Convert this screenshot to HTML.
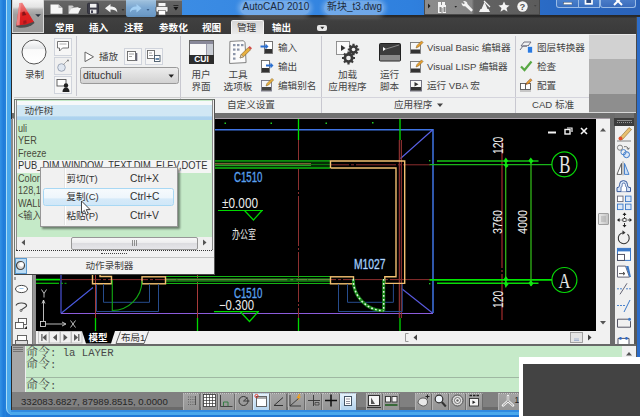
<!DOCTYPE html>
<html><head><meta charset="utf-8">
<style>
html,body{margin:0;padding:0;}
body{width:640px;height:417px;overflow:hidden;position:relative;background:#1f7ad8;font-family:"Liberation Sans","Noto Sans CJK SC",sans-serif;font-size:10px;color:#333;}
div,span{position:absolute;box-sizing:border-box;white-space:nowrap;}
svg{position:absolute;overflow:visible;}
.t{line-height:12px;height:12px;}
.tab{color:#fff;font-size:9.6px;font-weight:bold;top:21px;line-height:13px;}
.lbl{font-size:9.6px;color:#444;line-height:12px;}
.c{text-align:center;}
.row{left:17.5px;font-size:10.6px;color:#4a4a3c;line-height:13px;transform-origin:0 50%;transform:scaleX(.86);}
.cmd{font-family:"Liberation Mono","Noto Serif CJK SC",monospace;font-size:10.6px;color:#484848;line-height:12px;left:26px;}
.cj{position:static;font-size:12px;line-height:12px;}
.sb{top:393px;width:17px;height:16px;background:linear-gradient(#9a9a9a,#808080);border-left:1px solid #b0b0b0;border-right:1px solid #606060;}
</style></head><body>
<!-- desktop / aero frame -->
<div style="left:0;top:0;width:6px;height:417px;background:linear-gradient(90deg,#3292e6,#1f7cda 60%,#2482dc)"></div>
<div style="left:6px;top:0;width:634px;height:414.500px;background:#49a8ec;border-left:1px solid #a8dcf8;border-bottom-left-radius:7px"></div>
<div style="left:11px;top:0;width:626px;height:410px;background:#2a2a2a"></div><div style="left:11px;top:410px;width:629px;height:1.500px;background:#2f8ae2"></div>

<!-- title bar -->
<div id="title" style="left:12px;top:0;width:624px;height:15px;background:linear-gradient(#a0a0a0 0,#646464 8%,#585858 100%)"></div>
<div style="left:182px;top:0;width:458px;height:17.500px;background:linear-gradient(90deg,#3b8ce4 0,#2f80de 50%,#2a6ac4 80%,#2a62b8 100%)"></div><div style="left:182px;top:15.500px;width:458px;height:1.500px;background:rgba(140,190,240,.5)"></div>
<div style="left:12px;top:14.500px;width:628px;height:19.500px;background:linear-gradient(#262626 0,#2c2c2c 10%,#404040 16%,#3a3a3a 100%)"></div>


<!-- app button -->
<div style="left:12px;top:0;width:32px;height:33px;background:linear-gradient(#f4f4f4 0,#e4e4e4 22%,#b4b4b4 30%,#a0a0a0 45%,#989898 100%);border:1px solid #d8d8d8;border-top:none"></div>
<svg style="left:12px;top:0" width="32" height="33" viewBox="0 0 32 33">
 <defs><linearGradient id="ag" x1="0" y1="0" x2="0" y2="1"><stop offset="0" stop-color="#f08484"/><stop offset=".38" stop-color="#e85050"/><stop offset=".45" stop-color="#e02222"/><stop offset="1" stop-color="#d81c20"/></linearGradient></defs>
 <path d="M4 26.500c4 2.500 13 1.500 18.500-3.500l-1-2l-17 3z" fill="#454545" opacity=".9"/>
 <polygon points="7.400,3 10.300,2.800 21.800,21.800 14,24.600 4.300,25.600" fill="url(#ag)"/>
 <polygon points="7.400,3 8.800,2.900 7.600,25.200 4.300,25.600" fill="#f29a9a" opacity=".8"/>
 <polygon points="10.300,12.300 12.300,11.300 14.300,15 10.300,15.800" fill="#8a1418"/>
 <polygon points="11.300,20.800 14.300,20.200 14.600,23.300 11.300,24" fill="#a4181c"/>
 <polygon points="23.200,14.300 29,14.300 26.100,17" fill="#2c3440"/>
</svg>
<!-- quick access -->
<div style="left:126px;top:0;width:30px;height:17px;background:linear-gradient(#a6cae8,#7eaedc 45%,#6a9ccc);border-radius:0 0 2px 2px;opacity:.92"></div>
<svg style="left:44px;top:0" width="140" height="18" viewBox="44 0 140 18">
 <path d="M50.500 4.500h8l4 3.500v5.800h-12z" fill="#f6f6f6"/><path d="M58.500 4.500v3.500h4z" fill="#b4b4b4"/>
 <path d="M68.500 5.500h4l1.500 1.500h4.500v6.500h-10z" fill="#cfcfcf"/><path d="M68.500 13.500l3-5.500h9.500l-3 5.500z" fill="#f4f4f4"/><path d="M71.500 8l6-1.500" stroke="#666" stroke-width=".5"/>
 <rect x="87.500" y="3.200" width="11" height="10.500" rx="1.200" fill="#3c3c48" stroke="#2a2a34" stroke-width=".8"/><rect x="90" y="3.800" width="6.500" height="3.800" fill="#f2f2f2"/><rect x="90" y="9.600" width="6.500" height="4" fill="#e8e8e8"/><rect x="91" y="10.400" width="2" height="2.600" fill="#445"/>
 <path d="M105 8.300l5.500-4.300v2.600c4.500 0 6.800 2 6.800 6c-1.400-2.200-3.400-3-6.800-3v2.800z" fill="#f4f4f4"/>
 <path d="M121.500 9h3l-1.500 2z" fill="#333"/>
 <path d="M141.500 8.300l-5-4.300v2.600c-4 0-6.500 2-6.500 5.800c1.300-2.200 3.200-2.900 6.500-2.900v2.900z" fill="#a4d0f4"/>
 <path d="M146.500 9h3l-1.500 2z" fill="#3a5f8c"/>
 <rect x="158.500" y="3" width="7" height="4" fill="#f4f4f4"/><rect x="156" y="6.500" width="12" height="5.500" rx="1" fill="#f0f0f0" stroke="#444" stroke-width=".7"/><rect x="158.500" y="10.500" width="7" height="4.500" fill="#fff" stroke="#555" stroke-width=".6"/>
 <path d="M173.400 7h5l-2.500 3.500z" fill="#141414"/><rect x="173.400" y="5" width="5" height="1" fill="#2a2a2a"/>
</svg>
<!-- title text -->
<div style="left:240px;top:1px;width:70px;height:14px;border-radius:7px;background:rgba(255,255,255,.3);box-shadow:0 0 4px 2px rgba(255,255,255,.28)"></div>
<div style="left:324px;top:1px;width:60px;height:14px;border-radius:7px;background:rgba(255,255,255,.3);box-shadow:0 0 4px 2px rgba(255,255,255,.28)"></div>
<div class="t" id="t1" style="left:242.500px;top:0.500px;font-size:10px;color:#1c2a3c">AutoCAD 2010</div>
<div class="t" id="t2" style="left:327px;top:0.500px;font-size:10px;color:#1c2a3c">新块_t3.dwg</div>
<!-- info center -->
<div style="left:424px;top:0;width:116px;height:15px;background:linear-gradient(90deg,#8c8c8c 0,#868686 41%,#626262 43%,#5c5c5c 100%);border:1px solid #4a4a4a;border-top:none"></div>
<svg style="left:424px;top:0" width="116" height="15" viewBox="424 0 116 15">
 <path d="M428 3.500l2.500 2.500l-2.500 2.500z" fill="#222"/>
 <path d="M438 2h3v3h1v-3h3v3h1v8h-3.500v-5h-1v5h-3.500v-8z" fill="#f4f4f4"/><rect x="439.500" y="7" width="2" height="5" fill="#888"/><rect x="443.500" y="7" width="2" height="5" fill="#888"/>
 <path d="M454.500 6h2.500l-1.250 1.800z" fill="#222"/>
 <path d="M463 1.500a3 3 0 0 1 4.500 2.500l5.500 6l-1.800 1.800l-6-5.500a3 3 0 0 1-3.500-3.600l2 1.600l1.200-1.200z" fill="#f4f4f4"/>
 <path d="M484.500 2l3 7h-6z M480.500 9h8l1.500 3h-11z" fill="#f4f4f4"/><path d="M484 1l6 6" stroke="#f4f4f4" stroke-width="1.200"/>
 <path d="M504 1.500l1.600 3.600l3.900.3l-3 2.500l1 3.800l-3.500-2.100l-3.500 2.100l1-3.800l-3-2.500l3.900-.3z" fill="#f4f4f4"/>
 <circle cx="522.500" cy="6.500" r="5.200" fill="#f4f4f4"/>
 <path d="M534 5h2.500l-1.250 1.800z" fill="#444"/>
</svg>
<div class="t" style="left:519.500px;top:1px;font-size:9.500px;font-weight:bold;color:#555;line-height:11px">?</div>
<!-- window buttons -->
<div style="left:556px;top:0;width:22.500px;height:8px;background:linear-gradient(#4a80cc,#3a70c0);border:1px solid #9abce6;border-top:none;border-radius:0 0 0 3px"></div>
<div style="left:578.500px;top:0;width:21px;height:8px;background:linear-gradient(#4a80cc,#3a70c0);border:1px solid #9abce6;border-top:none;border-left:none"></div>
<div style="left:600px;top:0;width:36px;height:8px;background:linear-gradient(#4a7cc8,#3a6cbc);border:1px solid #9abce6;border-top:none;border-radius:0 0 3px 3px"></div>
<svg style="left:555px;top:0" width="85" height="9" viewBox="555 0 85 9">
 <rect x="563.500" y="2.200" width="8.500" height="2.500" fill="#fff" stroke="#345" stroke-width=".4"/>
 <rect x="585.500" y="-2" width="6.500" height="5.800" fill="#2a4a80" stroke="#fff" stroke-width="1.700"/>
 <path d="M614 -3l8 8M622 -3l-8 8" fill="none" stroke="#fff" stroke-width="2"/>
</svg>
<!-- tabs -->
<div style="left:231px;top:20px;width:33px;height:15px;background:linear-gradient(#d6d6d6,#ececec);border-radius:2px 2px 0 0;border:1px solid #f4f4f4;border-bottom:none"></div>
<div class="tab" style="left:55px">常用</div>
<div class="tab" style="left:89px">插入</div>
<div class="tab" style="left:124px">注释</div>
<div class="tab" style="left:159px">参数化</div>
<div class="tab" style="left:202px">视图</div>
<div class="tab" style="left:237px;color:#333;font-weight:normal">管理</div>
<div class="tab" style="left:272px">输出</div>
<div style="left:316.500px;top:25px;width:10.500px;height:6px;background:#e8e8e8;border-radius:2px"></div>
<svg style="left:316.500px;top:25px" width="11" height="6"><path d="M3.300 1.800h4l-2 2.500z" fill="#333"/></svg>

<!-- ribbon body -->
<div id="ribbon" style="left:12px;top:34px;width:577px;height:79px;background:#f0f1f1"></div>
<div style="left:589px;top:34px;width:47px;height:25px;background:#d2d2d2;border-top:1px solid #e8e8e8"></div>
<div style="left:589px;top:59px;width:47px;height:34.500px;background:#b0b0b0"></div>
<div style="left:589px;top:93.500px;width:47px;height:18.500px;background:#8e8e8e"></div><div style="left:589px;top:112px;width:47px;height:1px;background:#d8d8d8"></div>
<div style="left:636.500px;top:17px;width:3.500px;height:400px;background:#2c6cc8"></div>


<!-- ribbon separators and title row -->
<div style="left:75.500px;top:36px;width:1px;height:60px;background:#c8c8d0"></div>
<div style="left:180px;top:36px;width:1px;height:77px;background:#c8c8d0"></div>
<div style="left:321px;top:36px;width:1px;height:77px;background:#c8c8d0"></div>
<div style="left:515px;top:36px;width:1px;height:77px;background:#c8c8d0"></div>
<div style="left:181px;top:97px;width:408px;height:1px;background:#d4d4dc"></div>
<div class="lbl" style="left:227px;top:99px">自定义设置</div>
<div class="lbl" style="left:394px;top:99px">应用程序</div>
<svg style="left:436.500px;top:103px" width="7" height="5"><path d="M0 .5h6l-3 3.500z" fill="#444"/></svg>
<div class="lbl" style="left:532px;top:99px">CAD 标准</div>

<!-- record panel -->
<svg style="left:20px;top:38px" width="30" height="30"><defs><linearGradient id="rg" x1="0" y1="0" x2="0" y2="1"><stop offset="0" stop-color="#fff"/><stop offset=".35" stop-color="#e4e6e8"/><stop offset=".4" stop-color="#fafafa"/><stop offset="1" stop-color="#fff"/></linearGradient></defs><circle cx="14" cy="14" r="12" fill="url(#rg)" stroke="#555" stroke-width="1"/></svg>
<div class="lbl c" style="left:14px;width:41px;top:69px">录制</div>
<div style="left:54px;top:38px;width:18px;height:18px;border:1px solid #d0d4dc;background:#f6f6f6"></div>
<div style="left:54px;top:57px;width:18px;height:18px;border:1px solid #d0d4dc;background:#f0f0f0"></div>
<div style="left:54px;top:76px;width:18px;height:18px;border:1px solid #d0d4dc;background:#f6f6f6"></div>
<svg style="left:54px;top:38px" width="18" height="56" viewBox="54 38 18 56">
 <path d="M57.500 41.500h11v6.500h-6l-3 3v-3h-2z" fill="#fff" stroke="#666" stroke-width=".9"/><path d="M59.500 44h7" stroke="#999" stroke-width=".8"/>
 <circle cx="61.500" cy="67.500" r="3.800" fill="#dfe6f0" stroke="#8a96a8" stroke-width=".8"/><path d="M63 65l5-5" stroke="#999" stroke-width=".8"/><circle cx="68" cy="60.500" r=".9" fill="#777"/>
 <rect x="57" y="79.500" width="9" height="6.500" fill="#fff" stroke="#555" stroke-width=".9"/><circle cx="66" cy="85.500" r="2.200" fill="#222"/><path d="M62.500 92c0-3 1.500-4.500 3.500-4.500s3.500 1.500 3.500 4.500z" fill="#222"/>
</svg>
<svg style="left:84px;top:51px" width="11" height="12"><path d="M1 1l8.500 4.800l-8.500 4.800z" fill="#fff" stroke="#666" stroke-width="1"/></svg>
<div class="lbl" style="left:99px;top:51px">播放</div>
<div style="left:124px;top:48px;width:18px;height:17px;border:1px solid #d0d4dc;background:#f6f6f6"></div>
<div style="left:145px;top:48px;width:18px;height:17px;border:1px solid #d0d4dc;background:#f6f6f6"></div>
<svg style="left:124px;top:48px" width="40" height="17" viewBox="124 48 40 17">
 <rect x="127.500" y="51.500" width="8" height="9" fill="#fff" stroke="#666" stroke-width=".9"/><path d="M129 54h5M129 56.500h3" stroke="#888" stroke-width=".8"/><path d="M136.500 53v8" stroke="#667" stroke-width="1.600"/>
 <rect x="147.500" y="50.500" width="7" height="8" fill="#fff" stroke="#666" stroke-width=".9"/><path d="M149 53h3M149 55.500h4" stroke="#888" stroke-width=".8"/><rect x="154.500" y="55.500" width="5.500" height="6" fill="#fff" stroke="#456" stroke-width=".9"/><rect x="155.500" y="58" width="3.500" height="2" fill="#68a"/>
</svg>
<div style="left:80px;top:67px;width:99px;height:17px;border:1px solid #9a9a9a;border-radius:2.500px;background:linear-gradient(#ececec,#d2d2d2)"></div>
<div class="t" style="left:83px;top:69px;font-size:10.5px;color:#333">dituchuli</div>
<svg style="left:168px;top:74px" width="7" height="5"><path d="M.5 .5h5.500l-2.750 3.300z" fill="#222"/></svg>

<!-- customize panel -->
<div style="left:189px;top:40px;width:25px;height:24px;background:#f8f8f8;border:1px solid #666"></div>
<div style="left:190px;top:41px;width:23px;height:2.500px;background:#889"></div>
<div style="left:206px;top:44px;width:7px;height:12px;background:#c8ccd4;border-left:1px solid #99a"></div>
<div style="left:189px;top:55px;width:25px;height:9px;background:#2c2c2c"></div>
<div class="t" style="left:189px;width:25px;top:55px;font-size:8.500px;font-weight:bold;color:#fff;text-align:center;line-height:9px;height:9px">CUI</div>
<div class="lbl c" style="left:181px;width:40px;top:69px">用户</div>
<div class="lbl c" style="left:181px;width:40px;top:81px">界面</div>
<svg style="left:228px;top:39px" width="24" height="26" viewBox="228 39 24 26">
 <path d="M230.500 41h13.500l1.500 2v20h-16.500z" fill="#fbfbfb" stroke="#777" stroke-width=".9" transform="rotate(-3 238 52)"/>
 <g fill="#8a94a8"><rect x="233" y="44" width="2.500" height="2.200"/><rect x="237" y="44" width="2.500" height="2.200"/><rect x="241" y="44" width="2.500" height="2.200"/><rect x="233" y="48.500" width="2.500" height="2.200"/><rect x="237" y="48.500" width="2.500" height="2.200"/><rect x="233" y="53" width="2.500" height="2.200"/><rect x="233" y="57.500" width="2.500" height="2.200"/></g>
 <path d="M240 58l1.200-3.500l7-7l2.300 2.300l-7 7z" fill="#e8b040" stroke="#7a5a20" stroke-width=".6"/><path d="M248.200 47.500l1.500-1.500l2.300 2.300l-1.500 1.500z" fill="#d0504a"/><path d="M240 58l1.200-3.500l2.300 2.300z" fill="#f0d8b0" stroke="#555" stroke-width=".4"/>
</svg>
<div class="lbl c" style="left:218px;width:40px;top:69px">工具</div>
<div class="lbl c" style="left:218px;width:40px;top:81px">选项板</div>
<svg style="left:260px;top:40px" width="14" height="52" viewBox="260 40 14 52">
 <rect x="264.500" y="41.500" width="8" height="12" fill="#fff" stroke="#666" stroke-width=".9"/><rect x="265" y="49" width="7" height="4" fill="#333"/><path d="M260.500 45.500h5v-2l3 3l-3 3v-2h-5z" fill="#2a6fd0"/>
 <rect x="261.500" y="60.500" width="8" height="12" fill="#fff" stroke="#666" stroke-width=".9"/><rect x="262" y="68" width="7" height="4" fill="#333"/><path d="M266 64.500h4.500v-2l3 3l-3 3v-2h-4.500z" fill="#2a6fd0"/>
 <rect x="261.500" y="80.500" width="10" height="10.500" fill="#f4f4f8" stroke="#778" stroke-width=".9"/><rect x="262" y="87" width="9" height="3.600" fill="#444"/><path d="M266 86l1-2.600l5-5l1.600 1.600l-5 5z" fill="#e8b040" stroke="#7a5a20" stroke-width=".5"/>
</svg>
<div class="lbl" style="left:278px;top:42px">输入</div>
<div class="lbl" style="left:278px;top:61px">输出</div>
<div class="lbl" style="left:278px;top:80px">编辑别名</div>

<!-- applications panel -->
<svg style="left:334px;top:39px" width="70" height="28" viewBox="334 39 70 28">
 <rect x="336.500" y="41.500" width="13" height="13" fill="#fafafa" stroke="#888" stroke-width=".9"/><path d="M341 45l4.500 3l-4.500 3z" fill="#333"/>
 <g fill="#3a3a3a"><circle cx="353.500" cy="49.500" r="4.200"/><circle cx="348.500" cy="58" r="5"/></g>
 <g stroke="#3a3a3a" stroke-width="2.200"><path d="M353.500 43.800v11.400M347.800 49.500h11.400M349.500 45.500l8 8M357.500 45.500l-8 8"/><path d="M348.500 51.500v13M342 58h13M344 53.500l9 9M353 53.500l-9 9"/></g>
 <circle cx="353.500" cy="49.500" r="1.800" fill="#f0f0f0"/><circle cx="348.500" cy="58" r="2.300" fill="#f0f0f0"/>
 <rect x="379.500" y="43.500" width="21" height="17.500" rx="1" fill="#3c3c3c" stroke="#222" stroke-width="1"/><rect x="380" y="55" width="20" height="5.500" fill="#8a8a8a"/><path d="M383 47l3 2l-3 2z" fill="#fff"/><path d="M386 49l13-4" stroke="#aaa" stroke-width=".7"/>
</svg>
<div class="lbl c" style="left:327px;width:41px;top:69px">加载</div>
<div class="lbl c" style="left:327px;width:41px;top:81px">应用程序</div>
<div class="lbl c" style="left:369px;width:41px;top:69px">运行</div>
<div class="lbl c" style="left:369px;width:41px;top:81px">脚本</div>
<svg style="left:409px;top:40px" width="15" height="52" viewBox="409 40 15 52">
 <rect x="410.500" y="42.500" width="10" height="11" fill="#f8f8f8" stroke="#777" stroke-width=".9"/><rect x="411" y="49.500" width="9" height="3.600" fill="#333"/><path d="M416 48l1-2.600l4.500-4.500l1.600 1.600l-4.500 4.500z" fill="#e8a030" stroke="#7a5a20" stroke-width=".5"/>
 <rect x="410.500" y="61.500" width="10" height="11" fill="#f8f8f8" stroke="#777" stroke-width=".9"/><rect x="411" y="68.500" width="9" height="3.600" fill="#333"/><path d="M416 67l1-2.600l4.500-4.500l1.600 1.600l-4.500 4.500z" fill="#e8a030" stroke="#7a5a20" stroke-width=".5"/>
 <rect x="410.500" y="80.500" width="11" height="10.500" fill="#f8f8f8" stroke="#667" stroke-width=".9"/><rect x="411" y="87" width="10" height="3.600" fill="#333"/><path d="M414.500 82l4 2.300l-4 2.300z" fill="#333"/>
</svg>
<div class="lbl" style="left:427px;top:42px">Visual Basic 编辑器</div>
<div class="lbl" style="left:427px;top:61px">Visual LISP 编辑器</div>
<div class="lbl" style="left:427px;top:80px">运行 VBA 宏</div>

<!-- CAD standards -->
<svg style="left:519px;top:40px" width="16" height="52" viewBox="519 40 16 52">
 <path d="M521 46l3-4h7l-3 4zM520 50l3-4h6" fill="none" stroke="#667" stroke-width=".9"/><rect x="527.500" y="46.500" width="5" height="6.500" fill="#2a7ae0" stroke="#fff" stroke-width=".6"/>
 <path d="M521 66.500l3.500 3.500l7-8.500" fill="none" stroke="#58a844" stroke-width="2.200"/>
 <rect x="520.500" y="83.500" width="5" height="6" fill="#fff" stroke="#555" stroke-width=".9"/><rect x="525.500" y="83.500" width="5" height="6" fill="#fff" stroke="#555" stroke-width=".9"/><path d="M520 91h11" stroke="#888" stroke-width=".8"/><path d="M526 84.500l1-2.300l3.500-3.500l1.500 1.500l-3.500 3.500z" fill="#e8a030" stroke="#7a3a20" stroke-width=".5"/>
</svg>
<div class="lbl" style="left:537px;top:42px">图层转换器</div>
<div class="lbl" style="left:537px;top:61px">检查</div>
<div class="lbl" style="left:537px;top:80px">配置</div>

<div style="left:635.500px;top:17px;width:1px;height:96px;background:#4a4a4a"></div>
<!-- area below ribbon -->
<div style="left:12px;top:113px;width:624px;height:6px;background:#707070"></div><div style="left:12px;top:118px;width:598px;height:1px;background:#a8a0a8"></div>
<!-- drawing -->
<div id="draw" style="left:36px;top:119px;width:560px;height:212px;background:#000"></div>


<svg id="cad" style="left:36px;top:119px" width="560" height="212" viewBox="36 119 560 212">
<g fill="none" stroke-width="1" shape-rendering="auto">
 <!-- green dots -->
 <g fill="#22cc22" stroke="none"><rect x="224.500" y="122.500" width="1.500" height="1.500"/><rect x="270.500" y="122.500" width="1.500" height="1.500"/><rect x="325.500" y="122.500" width="1.500" height="1.500"/><rect x="372" y="122" width="1.500" height="1.500"/></g>
 <!-- blue frame -->
 <path d="M215 129.800H433V313" stroke="#3f74e4" stroke-width="1.500"/>
 <path d="M400.500 158.500L432.500 130" stroke="#5a62e8" stroke-width="1.100"/>
 <path d="M61 275V313.500" stroke="#4a52d8" stroke-width="1.200"/>
 <path d="M61 313.500H433" stroke="#8c5cdc" stroke-width="1.100"/>
 <path d="M61.500 313L93 287.500" stroke="#4a5ae0" stroke-width="1.100"/>
 <path d="M401.500 288.500L432.500 313" stroke="#5a5ae0" stroke-width="1.100"/>
 <!-- red verticals -->
 <path d="M298.500 140V318" stroke="#8c3030" stroke-width="1" stroke-dasharray="50 2 2 2"/>
 <path d="M399.300 140V318M401.300 140V318" stroke="#a83a3a" stroke-width="1"/>
 <path d="M95.500 275V318M197.500 275V318" stroke="#a83a3a" stroke-width="1"/>
 <path d="M502 140V320" stroke="#8c2626" stroke-width="1.400" stroke-dasharray="128 2 2 2 26 2 2 2"/>
 <!-- green verticals top/bottom -->
 <path d="M298.500 119V140M400 119V140" stroke="#00e000" stroke-width="1.300"/>
 <path d="M95.500 318V331M197.500 318V331M298.500 318V331M400 318V331" stroke="#00d800" stroke-width="1.300"/>
 <!-- red horizontals -->
 <path d="M215 164.800H430" stroke="#8c2e2e" stroke-width="1" stroke-dasharray="40 2 3 2"/>
 <path d="M61 279.600H430" stroke="#8c2e2e" stroke-width="1" stroke-dasharray="40 2 3 2"/>
 <!-- window bands -->
 <rect x="215" y="160" width="115" height="8.800" fill="#062c06" stroke="none"/>
 <path d="M215 160.900H330M215 168H330" stroke="#0c8e0c" stroke-width="1.800"/>
 <path d="M215 163.800H311" stroke="#7c5e36" stroke-width="1.500"/><path d="M311 164.500H330" stroke="#0a7a0a" stroke-width="1"/>
 <path d="M215 165.300H311" stroke="#22a422" stroke-width="1.300"/>
 <rect x="165.500" y="278.100" width="164.500" height="4" fill="#0a6a0a" stroke="none"/>
 <path d="M165.500 276.500H330M165.500 283.500H330" stroke="#14b414" stroke-width="1.200"/>
 <path d="M165.500 279.700H330" stroke="#8c8c58" stroke-width=".9" stroke-dasharray="11 .8 110 3 3 3"/>
 <path d="M36 279.600H60" stroke="#00e800" stroke-width="1.700"/><path d="M36 283.300H59" stroke="#08c808" stroke-width="1.200"/><path d="M61 283.300H68" stroke="#10b010" stroke-width="1" stroke-dasharray="2 1.500"/>
 <!-- orange walls -->
 <g stroke="#f2c070" stroke-width="1.400">
 <path d="M330.500 168V161H404.700V283.400H384.800V276.800H396V168H330.500"/>
 <rect x="330.500" y="276.800" width="23" height="7"/>
 <rect x="142" y="276.800" width="23.500" height="7"/>
 <path d="M92.500 275V283.800H111.500V276.500H100V275"/>
 </g>
 <!-- blue door frames -->
 <g stroke="#264c8c" stroke-width="1">
 <path d="M96.500 284V311.500H158.500V284M103.500 284V302.300H149.500V284"/>
 <path d="M338.500 284V311.500H402.300V284M347.500 284V302.300H393.400V284"/>
 </g>
 <!-- doors -->
 <path d="M112.300 280V310.500A30 30 0 0 0 142 281" stroke="#12a412" stroke-width="1.150"/>
 <path d="M383.700 279V311M353.300 279A31 31 0 0 0 383.500 310.800" stroke="#1a8a1a" stroke-width="3"/>
 <path d="M383.700 279V311M353.300 279A31 31 0 0 0 383.500 310.800" stroke="#e0f4e0" stroke-width="1.500" stroke-dasharray="1.800 2.200"/>
 <!-- green dimension lines -->
 <g stroke="#10d010">
 <path d="M437 161H538.500" stroke="#14c414" stroke-width="1.300"/><path d="M437 283.300H538.500" stroke="#08dc08" stroke-width="1.400"/>
 <path d="M429.500 164.700H552" stroke="#1ab41a" stroke-width="1.200"/><path d="M429.500 279.900H552" stroke="#00e600" stroke-width="1.700"/>
 <path d="M505.700 161V287.500M531 160V286" stroke="#30b418" stroke-width="1.300"/>
 <circle cx="564.400" cy="164.300" r="12.500" stroke="#08d808" stroke-width="1.200"/>
 <circle cx="564.400" cy="280" r="12.500" stroke="#08d808" stroke-width="1.200"/>
 </g>
 <g fill="#10e810" stroke="none">
 <path d="M503.500 161l2.300-3.500l2.500 3.500l-2.500 2.500zM503.800 165l2.200-2.500l2.500 3.500l-2.500 2zM528.500 160.500l2.300-3l2.700 3.500l-2.500 3z"/>
 <path d="M503.500 279.500l2.300-3.500l2.500 3.500l-2.500 2.500zM503.800 283.500l2.200-2.500l2.500 3.500l-2.500 2.500zM528.500 283l2.300-3l2.700 3.500l-2.500 3z"/>
 </g>
 <g fill="#22cc22" stroke="none"><rect x="429" y="160" width="1.300" height="1.300"/><rect x="429" y="283" width="1.300" height="1.300"/></g>
 <!-- elevation markers -->
 <g stroke="#00d800" stroke-width="1.200">
 <path d="M218 210.500H263M244.500 210.500L253.500 220L262 210.500"/>
 <path d="M214 311.700H259M240.500 312L249.500 321.500L258 312"/>
 </g>
 <!-- UCS icon -->
 <g stroke="#dcdcdc" stroke-width=".85">
 <path d="M43.500 321V300M45.500 324H65M62 322l4 2l-4 2M42 303.500l1.500-3.500l1.500 3.500"/>
 <rect x="40.500" y="321.500" width="5" height="5"/>
 <path d="M41.500 289.500l2.500 4l2.500-4M44 293.500V297.500"/>
 <path d="M70.500 320.500l5 7M75.500 320.500l-5 7"/>
 </g>
 <!-- doc window buttons -->
 <g stroke="#f4f4f4" stroke-width="1.600">
 <path d="M548 132.500H556" stroke-width="2"/>
 <rect x="565" y="129.500" width="5" height="4.500" stroke-width="1.400"/><path d="M567 128H572V132" stroke-width="1.200"/>
 <path d="M581 128l6 6M587 128l-6 6"/>
 </g>
</g>
<g font-family="'Liberation Sans','Noto Sans CJK SC',sans-serif" lengthAdjust="spacingAndGlyphs">
 <text x="234" y="181.800" font-size="15" fill="#5aa0ee" stroke="#5aa0ee" stroke-width=".35" textLength="28.500" lengthAdjust="spacingAndGlyphs">C1510</text>
 <text x="234" y="297.800" font-size="15" fill="#5aa0ee" stroke="#5aa0ee" stroke-width=".35" textLength="28.500" lengthAdjust="spacingAndGlyphs">C1510</text>
 <text x="222" y="207.700" font-size="14" fill="#ececec" textLength="36" lengthAdjust="spacingAndGlyphs">±0.000</text>
 <text x="219" y="309.700" font-size="14" fill="#ececec" textLength="35" lengthAdjust="spacingAndGlyphs">−0.300</text>
 <text x="232" y="238.500" font-size="12" fill="#e8e8e8" textLength="24" lengthAdjust="spacingAndGlyphs">办公室</text>
 <text x="354" y="269.200" font-size="15.500" fill="#dcefff" textLength="31.500" lengthAdjust="spacingAndGlyphs" stroke="#5a9ae8" stroke-width=".45">M1027</text>
 <text transform="translate(502.800 154) rotate(-90)" font-size="15" fill="#f0f0f0" textLength="17.300" lengthAdjust="spacingAndGlyphs">120</text>
 <text transform="translate(502.800 308) rotate(-90)" font-size="15" fill="#f0f0f0" textLength="17.300" lengthAdjust="spacingAndGlyphs">120</text>
 <text transform="translate(502.300 234) rotate(-90)" font-size="13.500" fill="#f0f0f0" textLength="24" lengthAdjust="spacingAndGlyphs">3760</text>
 <text transform="translate(527.300 234) rotate(-90)" font-size="13.500" fill="#f0f0f0" textLength="24" lengthAdjust="spacingAndGlyphs">4000</text>
 <text x="559" y="172.700" font-family="'Liberation Serif',serif" font-size="24.500" fill="#e4e4e4" textLength="11.500" lengthAdjust="spacingAndGlyphs">B</text>
 <text x="558.500" y="287.700" font-family="'Liberation Serif',serif" font-size="22" fill="#e4e4e4" textLength="12" lengthAdjust="spacingAndGlyphs">A</text>
</g>
</svg>


<!-- left toolbar -->
<div style="left:11px;top:119px;width:2px;height:227px;background:#8a8a8a"></div>
<div style="left:13px;top:119px;width:18.500px;height:226px;background:#f0f0f0"></div>
<div style="left:31.500px;top:119px;width:4.500px;height:225px;background:linear-gradient(90deg,#6a6a6a,#9a9a9a 40%,#8a8a8a)"></div>
<svg style="left:13px;top:275px" width="19" height="70" viewBox="13 275 19 70">
 <path d="M15 277v3" stroke="#555" stroke-width="1"/>
 <ellipse cx="21.500" cy="289" rx="6" ry="3.600" fill="#fff" stroke="#444" stroke-width="1"/><path d="M19.500 288.500h4" stroke="#9cc4e8" stroke-width="1"/>
 <path d="M16 305.500c1-3 9-3.500 10.500-.5c1 2.500-4 3-5 5" fill="none" stroke="#444" stroke-width="1.100"/><circle cx="21" cy="310.500" r="1" fill="none" stroke="#444" stroke-width=".8"/>
 <rect x="18.500" y="318.500" width="8" height="6" fill="#fff" stroke="#555" stroke-width=".9"/><rect x="15.500" y="322.500" width="8" height="6" fill="#fff" stroke="#555" stroke-width=".9"/><path d="M24 329l3 0l0 -3z" fill="#222"/>
 <rect x="17.500" y="335.500" width="9" height="5" fill="#fff" stroke="#555" stroke-width=".9"/><rect x="15.500" y="340.500" width="12" height="5" fill="#ddd" stroke="#555" stroke-width=".9"/>
</svg>

<!-- vertical scrollbar of drawing -->
<div style="left:596px;top:119px;width:14px;height:212px;background:#f1f1f1"></div>
<div style="left:597.500px;top:213px;width:11px;height:12px;background:linear-gradient(90deg,#e8e8e8,#c4c4c4);border:1px solid #a0a0a0;border-radius:1px"></div>
<svg style="left:596px;top:119px" width="14" height="212" viewBox="596 119 14 212">
 <path d="M600 131.500l3-3.500l3 3.500z" fill="#555"/><path d="M600 321l3 3.500l3-3.500z" fill="#555"/>
 <path d="M601 217h5M601 219h5M601 221h5" stroke="#999" stroke-width=".7"/>
</svg>
<div style="left:610px;top:113px;width:5px;height:232px;background:#6c6c6c"></div>
<!-- right toolbar -->
<div style="left:614px;top:118px;width:20px;height:8px;background:#3c3c3c"></div>
<div style="left:617px;top:120px;width:15px;height:1px;background:#8a8a8a"></div>
<div style="left:617px;top:122px;width:15px;height:1px;border-top:1px dotted #999"></div>
<div style="left:615px;top:126px;width:18.500px;height:219px;background:#f0f0f0"></div>
<div style="left:633.500px;top:113px;width:3px;height:297px;background:#585858"></div>
<svg style="left:615px;top:126px" width="20" height="219" viewBox="615 126 20 219">
 <g transform="translate(0 -2.5)"><path d="M620 140l9-10l2.500 2l-9 10z" fill="#e8c070" stroke="#8a6a30" stroke-width=".6"/><circle cx="620.500" cy="141" r="2" fill="#e0502a"/><path d="M617 143.500h14" stroke="#666" stroke-width=".8"/></g>
 <g transform="translate(0 -2.8)"><circle cx="620" cy="150.500" r="2.600" fill="none" stroke="#777" stroke-width=".9"/><circle cx="626.500" cy="157.500" r="3" fill="#dce8f8" stroke="#3a78c8" stroke-width="1"/><circle cx="623.500" cy="155" r="2.600" fill="none" stroke="#3a78c8" stroke-width=".9"/><path d="M624 149.500c2.500-.5 4 .5 4.500 2.500l1-1.500M628.500 152l-1.700-.5" fill="none" stroke="#555" stroke-width=".8"/></g>
 <g transform="translate(0 -4.6)"><path d="M623 166v14" stroke="#777" stroke-width=".7"/><path d="M621.500 168v11h-4.500z" fill="#fff" stroke="#555" stroke-width=".9"/><path d="M624.500 168v11h4.500z" fill="#cfe0f4" stroke="#3a78c8" stroke-width=".9"/></g>
 <g transform="translate(0 -7.9)"><path d="M617 199.500v-4c2 0 2.500-1 2.500-3a4 4 0 0 1 8 0c0 2 .5 3 3 3v4z" fill="#d8e6f8" stroke="#3a5a9a" stroke-width="1"/><path d="M621 199.500v-4.500c1 0 1.200-1 1.200-2.500a1.600 1.600 0 0 1 3.200 0c0 1.500 .2 2.500 1.200 2.500v4.500" fill="#fff" stroke="#3a5a9a" stroke-width=".8"/></g>
 <g transform="translate(0 -10.4)"><g fill="#fff" stroke="#667" stroke-width=".9"><rect x="617.500" y="206.500" width="5.500" height="5.500"/><rect x="625.500" y="206.500" width="5.500" height="5.500" stroke="#3a78c8" fill="#dce8f8"/><rect x="617.500" y="214.500" width="5.500" height="5.500" stroke="#3a78c8" fill="#dce8f8"/><rect x="625.500" y="214.500" width="5.500" height="5.500" stroke="#3a78c8" fill="#dce8f8"/></g></g>
 <g transform="translate(0 -12.0)"><path d="M624.500 226v12M618.500 232h12" stroke="#333" stroke-width="1" stroke-dasharray="2 1"/><path d="M624.500 224.500l2 2.500h-4zM624.500 239.500l2-2.500h-4zM617 232l2.500-2v4zM632 232l-2.500-2v4z" fill="#222"/><rect x="623" y="230.500" width="3" height="3" fill="#fff" stroke="#333" stroke-width=".7"/></g>
 <g transform="translate(0 -13.3)"><path d="M627.500 247.500a5.500 5.500 0 1 1-4-1.500" fill="none" stroke="#333" stroke-width="1.100"/><path d="M622.500 243.500l3 2.500l-3 2z" fill="#333"/></g>
 <g transform="translate(0 -14.1)"><rect x="617.500" y="262.500" width="13" height="12" fill="#fff" stroke="#3a78c8" stroke-width="1"/><rect x="617.500" y="262.500" width="13" height="3" fill="#3a78c8"/><rect x="617.500" y="268.500" width="7" height="6" fill="#fff" stroke="#445" stroke-width=".9"/></g>
 <g transform="translate(0 -17.4)"><path d="M617.500 283.500h8l4 11h-12z" fill="#fff" stroke="#556" stroke-width=".9"/><path d="M626 283.500l3.500 11h1.500l-2.500-11z" fill="#3a78c8"/><path d="M619 291h5M623 289.500l2 1.500l-2 1.500" stroke="#222" stroke-width=".8" fill="none"/></g>
 <g transform="translate(0 -14.7)"><path d="M617 303.500h5M626 303.500h6" stroke="#3a78c8" stroke-width=".9" stroke-dasharray="2 1"/><path d="M620 309l7-11" stroke="#556" stroke-width=".9"/></g>
 <g transform="translate(0 -15.0)"><path d="M617 320.500h8" stroke="#3a78c8" stroke-width=".9" stroke-dasharray="2 1"/><path d="M624 327l6-12" stroke="#3a78c8" stroke-width="1"/></g>
 <g transform="translate(0 -13.8)"><path d="M617.500 341v-8h11" fill="none" stroke="#445" stroke-width=".9"/><path d="M617.500 341h13v-6" fill="none" stroke="#445" stroke-width=".9"/><circle cx="629.500" cy="333" r="1.500" fill="#3a78c8"/></g>
 <g transform="translate(0 3.4)"><path d="M618 342.500v-7.500h11v7.500" fill="#fff" stroke="#445" stroke-width=".9"/><circle cx="620.500" cy="335" r="1.300" fill="#2a68c8"/><circle cx="626.500" cy="335" r="1.300" fill="#2a68c8"/></g>
</svg>
<div style="left:612px;top:344px;width:24px;height:2px;background:#5a5a5a"></div>

<!-- model tab bar -->
<div style="left:36px;top:331px;width:574px;height:13px;background:#f1f1f1"></div>
<svg style="left:36px;top:331px" width="574" height="13" viewBox="36 331 574 13">
 <g stroke="#b8b8b8" stroke-width=".8" fill="none"><rect x="38.500" y="331.500" width="10.500" height="11.500"/><rect x="49.500" y="331.500" width="10.500" height="11.500"/><rect x="60.500" y="331.500" width="10.500" height="11.500"/><rect x="71.500" y="331.500" width="10.500" height="11.500"/></g>
 <g fill="#555"><path d="M46.500 334v7l-4-3.500z"/><rect x="41.300" y="334" width="1.200" height="7"/><path d="M57 334v7l-4-3.500z"/><path d="M63.500 334v7l4-3.500z"/><path d="M74 334v7l4-3.500z"/><rect x="78.200" y="334" width="1.200" height="7"/></g>
 <path d="M82 331h33l-4 12.500h-25z" fill="#000"/>
 <path d="M116 343.500l4.500-12M144 343.500l4.500-12M116 343.500h28" stroke="#555" stroke-width=".9" fill="none"/>
 <path d="M405.500 333.500v8h3M405.500 333.500h3" stroke="#999" stroke-width="1" fill="none"/><path d="M417 334.500v6l-3.500-3z" fill="#444"/>
 <rect x="570.500" y="332.500" width="12" height="10" fill="#e4e4e4" stroke="#9a9a9a" stroke-width=".9"/><path d="M574 339h5M574 340.500h5" stroke="#8aa0c8" stroke-width=".7"/>
 <path d="M588 334.500v6l3.500-3z" fill="#444"/>
</svg>
<div class="t" style="left:88.500px;top:332px;font-size:9.500px;color:#fff;font-weight:bold;line-height:11px">模型</div>
<div class="t" style="left:121px;top:332px;font-size:9.500px;color:#333;line-height:11px">布局1</div>


<!-- action tree panel -->
<div style="left:14px;top:97px;width:201px;height:1px;background:#cfcfcf"></div><div style="left:14px;top:98.500px;width:201px;height:176px;background:#f1f1f1;border:1px solid #707870;border-right-color:#555;border-bottom-color:#444"></div>
<div style="left:16px;top:100px;width:196.500px;height:150px;background:#c5eac8;border:1px solid #8a8a8a;border-top:none;border-bottom:1px dotted #444"></div>
<div style="left:17px;top:101px;width:195px;height:4px;background:#f6f8fa"></div>
<div style="left:17px;top:104.500px;width:194.500px;height:11.500px;background:#d0e7f4"></div>
<div style="left:17px;top:115.500px;width:194.500px;height:4.500px;background:linear-gradient(#c0def2,#acd2ee 40%)"></div>
<div class="lbl" style="left:24.500px;top:104.500px;color:#444">动作树</div>
<div style="left:17px;top:160px;width:194px;height:12.500px;background:#f4f5f4"></div>
<div style="left:17px;top:120px;width:195px;height:116px;overflow:hidden;position:absolute" id="rows"><div style="left:-17px;top:-120px;width:300px;height:300px">
<div class="row" style="top:121.5px" id="r0">uli</div>
<div class="row" style="top:134.1px;left:18.2px" id="r1">YER</div>
<div class="row" style="top:146.6px" id="r2">Freeze</div>
<div class="row" style="top:159.2px;color:#333;transform:scaleX(.881);left:18px" id="r3">PUB_DIM,WINDOW_TEXT,DIM_ELEV,DOTE</div>
<div class="row" style="top:171.7px" id="r4">Color</div>
<div class="row" style="top:184.2px" id="r5">128,128,128</div>
<div class="row" style="top:196.8px" id="r6">WALL</div>
<div class="row" style="top:209.4px" id="r7">&lt;输入</div>
</div></div>
<!-- h scrollbar in panel -->
<div style="left:17px;top:236.500px;width:195px;height:13px;background:#f0f0f0"></div>
<div style="left:71px;top:237px;width:127px;height:12.500px;border:1px solid #979797;border-radius:2px;background:linear-gradient(#f8f8f8,#ececee 45%,#dcdce0 50%,#e6e6ea)"></div>
<svg style="left:17px;top:236px" width="195" height="14" viewBox="17 236 195 14">
 <path d="M25 239.500v6l-3.500-3z" fill="#555"/><path d="M203 239.500v6l3.500-3z" fill="#555"/>
 <path d="M132.500 240v6M134.500 240v6M136.500 240v6" stroke="#777" stroke-width=".8"/>
</svg>
<div style="left:16px;top:249.500px;width:196px;height:1px;border-top:1px dotted #333"></div><div style="left:101px;top:252.500px;width:26px;height:2px;border-top:1.500px dotted #444"></div>
<div style="left:15px;top:256.500px;width:199px;height:1px;background:#c4c4c4"></div>
<div style="left:14.500px;top:258px;width:12px;height:16px;background:#bcdcf4;border:1px solid #5a9ad0"></div>
<svg style="left:15px;top:259px" width="12" height="14"><circle cx="5.500" cy="6.500" r="4" fill="#d8d8d8" stroke="#444" stroke-width="1.200"/><circle cx="6.500" cy="5.500" r="2.200" fill="#fff"/></svg>
<div class="lbl" style="left:85.500px;top:260px;color:#444">动作录制器</div>

<!-- context menu -->
<div style="left:40px;top:166.500px;width:137.500px;height:60px;background:#f1f1f1;border:1px solid #979797;box-shadow:2px 2px 2px rgba(0,0,0,.45)"></div>
<div style="left:63.500px;top:168px;width:1px;height:57px;background:#e2e3e3;border-right:1px solid #fff;width:2px"></div>
<div style="left:43px;top:187.500px;width:131px;height:18px;border:1px solid #a8d8f4;border-radius:2.500px;background:linear-gradient(#f6fafd 0,#eef6fc 55%,#d6eaf9 62%,#d0e7f8 100%)"></div>
<div class="t" style="left:66.500px;top:172.500px;font-size:9.500px;color:#333" id="m0">剪切(T)</div>
<div class="t" style="left:66.500px;top:190.500px;font-size:9.500px;color:#333" id="m1">复制(C)</div>
<div class="t" style="left:66.500px;top:209.500px;font-size:9.500px;color:#333" id="m2">粘贴(P)</div>
<div class="t" style="left:130px;top:172.500px;font-size:10.300px;color:#333" id="k0">Ctrl+X</div>
<div class="t" style="left:130px;top:190.500px;font-size:10.300px;color:#333" id="k1">Ctrl+C</div>
<div class="t" style="left:130px;top:209.500px;font-size:10.300px;color:#333" id="k2">Ctrl+V</div>
<!-- cursor -->
<svg style="left:80px;top:200px" width="12" height="17"><path d="M1.500 1v12l2.800-2.600l2 4.600l2-.9l-2-4.500h3.800z" fill="#fff" stroke="#333" stroke-width=".9"/></svg>

<!-- command -->
<div style="left:12px;top:343.500px;width:624px;height:3px;background:#686868"></div>
<div style="left:12px;top:346px;width:13px;height:46px;background:#a6a6a6"></div>
<div style="left:25px;top:346px;width:597px;height:46px;background:#c6eac9;border-left:1px solid #eee"></div>
<div style="left:12px;top:392px;width:624px;height:18px;background:#808080"></div>
<div style="left:12px;top:407px;width:624px;height:3px;background:#6a6a6a"></div>


<svg style="left:13px;top:347px" width="11" height="5"><path d="M0 .5h10M0 2.500h10M0 4.500h10" stroke="#666" stroke-width=".8"/></svg>
<div class="cmd" style="top:347px"><span class="cj">命令</span>: la LAYER</div>
<div class="cmd" style="top:359px"><span class="cj">命令</span>:</div>
<div style="left:26px;top:377px;width:596px;height:1px;background:#9fb8a2"></div>
<div class="cmd" style="top:379.500px"><span class="cj">命令</span>:</div>
<div style="left:622px;top:346px;width:14px;height:46px;background:#f1f1f1"></div>
<svg style="left:622px;top:346px" width="14" height="14"><path d="M4 9.500l3-3.500l3 3.500z" fill="#555"/></svg>
<div class="t" id="coords" style="left:21px;top:395.500px;font-size:9.600px;color:#262626;transform-origin:0 50%;transform:scaleX(1)">332083.6827, 87989.8515, 0.0000</div>

<div style="left:183.2px;top:392.5px;width:17.3px;height:17.5px;background:linear-gradient(#a4a4a4,#949494);border-left:1px solid #b4b4b4;border-right:1px solid #6c6c6c;border-top:1px dotted #c8c8c8"></div>
<div style="left:200.6px;top:392.5px;width:17.3px;height:17.5px;background:linear-gradient(#a4a4a4,#949494);border-left:1px solid #b4b4b4;border-right:1px solid #6c6c6c;border-top:1px dotted #c8c8c8"></div>
<div style="left:218px;top:392.5px;width:17.3px;height:17.5px;background:linear-gradient(#a4a4a4,#949494);border-left:1px solid #b4b4b4;border-right:1px solid #6c6c6c;border-top:1px dotted #c8c8c8"></div>
<div style="left:235.4px;top:392.5px;width:17.3px;height:17.5px;background:linear-gradient(#a4a4a4,#949494);border-left:1px solid #b4b4b4;border-right:1px solid #6c6c6c;border-top:1px dotted #c8c8c8"></div>
<div style="left:252.8px;top:392.5px;width:17.3px;height:17.5px;background:linear-gradient(#e4f0fa,#b4d4ee);border-left:1px solid #d8ecfc;border-right:1px solid #6c6c6c;border-top:1px dotted #c8c8c8"></div>
<div style="left:270.2px;top:392.5px;width:17.3px;height:17.5px;background:linear-gradient(#a4a4a4,#949494);border-left:1px solid #b4b4b4;border-right:1px solid #6c6c6c;border-top:1px dotted #c8c8c8"></div>
<div style="left:287.6px;top:392.5px;width:17.3px;height:17.5px;background:linear-gradient(#a4a4a4,#949494);border-left:1px solid #b4b4b4;border-right:1px solid #6c6c6c;border-top:1px dotted #c8c8c8"></div>
<div style="left:305px;top:392.5px;width:17.3px;height:17.5px;background:linear-gradient(#a4a4a4,#949494);border-left:1px solid #b4b4b4;border-right:1px solid #6c6c6c;border-top:1px dotted #c8c8c8"></div>
<div style="left:322.3px;top:392.5px;width:17.3px;height:17.5px;background:linear-gradient(#a4a4a4,#949494);border-left:1px solid #b4b4b4;border-right:1px solid #6c6c6c;border-top:1px dotted #c8c8c8"></div>
<div style="left:339.6px;top:392.5px;width:17.3px;height:17.5px;background:linear-gradient(#e4f0fa,#b4d4ee);border-left:1px solid #d8ecfc;border-right:1px solid #6c6c6c;border-top:1px dotted #c8c8c8"></div>
<div style="left:365.5px;top:392.5px;width:17.3px;height:17.5px;background:linear-gradient(#a4a4a4,#949494);border-left:1px solid #b4b4b4;border-right:1px solid #6c6c6c;border-top:1px dotted #c8c8c8"></div>
<div style="left:382.8px;top:392.5px;width:17.3px;height:17.5px;background:linear-gradient(#a4a4a4,#949494);border-left:1px solid #b4b4b4;border-right:1px solid #6c6c6c;border-top:1px dotted #c8c8c8"></div>
<div style="left:415px;top:392.5px;width:17.3px;height:17.5px;background:linear-gradient(#a4a4a4,#949494);border-left:1px solid #b4b4b4;border-right:1px solid #6c6c6c;border-top:1px dotted #c8c8c8"></div>
<div style="left:432px;top:392.5px;width:17.3px;height:17.5px;background:linear-gradient(#a4a4a4,#949494);border-left:1px solid #b4b4b4;border-right:1px solid #6c6c6c;border-top:1px dotted #c8c8c8"></div>
<div style="left:449px;top:392.5px;width:17.3px;height:17.5px;background:linear-gradient(#a4a4a4,#949494);border-left:1px solid #b4b4b4;border-right:1px solid #6c6c6c;border-top:1px dotted #c8c8c8"></div>
<div style="left:466px;top:392.5px;width:17.3px;height:17.5px;background:linear-gradient(#a4a4a4,#949494);border-left:1px solid #b4b4b4;border-right:1px solid #6c6c6c;border-top:1px dotted #c8c8c8"></div>
<div style="left:498px;top:392.500px;width:22px;height:17.500px;background:linear-gradient(#a4a4a4,#949494);border-left:1px solid #b4b4b4;border-top:1px dotted #c8c8c8"></div>

<svg style="left:183px;top:392px" width="340" height="17" viewBox="183 392 340 17">
 <g stroke="#555" stroke-width=".8" stroke-dasharray="1 1.200" fill="none"><path d="M188 397h8M188 399.500h8M188 402h8M188 404.500h8"/></g><path d="M195.500 396v9" stroke="#444" stroke-width=".8"/>
 <rect x="203.500" y="394.500" width="12" height="12" fill="#fff" stroke="#333" stroke-width=".8"/><path d="M206.500 394.500v12M209.500 394.500v12M212.500 394.500v12M203.500 397.500h12M203.500 400.500h12M203.500 403.500h12" stroke="#333" stroke-width=".7"/>
 <path d="M220.500 395v11.500h12" fill="none" stroke="#444" stroke-width="1"/><path d="M223.500 406v-4h4.500v4" fill="none" stroke="#2a7a3a" stroke-width=".9"/>
 <circle cx="243.500" cy="401" r="4.500" fill="none" stroke="#333" stroke-width="1"/><path d="M243.500 401h6M243.500 401l4-3.500" stroke="#333" stroke-width=".9"/>
 <rect x="256.500" y="396.500" width="10" height="10" fill="#fff" stroke="#555" stroke-width=".9"/><rect x="257" y="397" width="9" height="2" fill="#aaa"/><circle cx="256.500" cy="396" r="1.600" fill="none" stroke="#e03020" stroke-width=".9"/>
 <path d="M274 405.500l9-8M274 405.500h9" stroke="#333" stroke-width="1" fill="none"/>
 <path d="M290 395v11h11M290 406l9-8" stroke="#333" stroke-width=".9" fill="none"/><path d="M299 394l-2.500 4h2l-1 3l3.500-4.500h-2l1.500-2.500z" fill="#f0a020"/>
 <path d="M308 400.500h12M313.500 395v11" stroke="#333" stroke-width=".9"/><path d="M315 402.500h4v2.500h-4z" fill="none" stroke="#333" stroke-width=".7"/>
 <path d="M325 400.500h12M331 394.500v12" stroke="#111" stroke-width="1.500"/>
 <rect x="344.500" y="396.500" width="7" height="9" fill="#fff" stroke="#456" stroke-width="1"/><path d="M346 399h4M346 401.500h4M346 403.500h4" stroke="#667" stroke-width=".7"/>
 <rect x="368.500" y="395.500" width="11" height="10" fill="#f4f4f4" stroke="#333" stroke-width="1"/><path d="M371 404v-6.500l4 6.500z" fill="#555"/><path d="M367 407.500h14" stroke="#333" stroke-width="1"/>
 <rect x="385.500" y="396.500" width="5" height="5.500" fill="#f4f4f4" stroke="#333" stroke-width=".9"/><rect x="392" y="396.500" width="5" height="5.500" fill="#f4f4f4" stroke="#333" stroke-width=".9"/><rect x="385" y="404" width="12.500" height="2" fill="#3a6a3a"/>
 <path d="M418 403c0-3 2-5 5-5c3 0 4.500 1.500 4.500 4c0 2-1.500 4-4 4c-2 0-3-1-5.500-3z" fill="#e8e8e8" stroke="#444" stroke-width=".8"/><path d="M427.500 394.500v4M425.500 396.500h4" stroke="#222" stroke-width="1"/>
 <circle cx="439" cy="399" r="3.800" fill="#eef4fa" stroke="#333" stroke-width="1.200"/><path d="M441.800 402l4 4.500" stroke="#333" stroke-width="2"/>
 <circle cx="457.500" cy="400.500" r="5.500" fill="#d8d8d8" stroke="#444" stroke-width=".9"/><circle cx="457.500" cy="400.500" r="3" fill="#f4f4f4" stroke="#555" stroke-width=".8"/><circle cx="457.500" cy="400.500" r="1.200" fill="#666"/>
 <rect x="469.500" y="398.500" width="9" height="7.500" fill="#f4f4f4" stroke="#333" stroke-width=".9"/><path d="M472.500 400.500v3.500l3-1.750z" fill="#222"/><path d="M469.500 395.500h2.500M473 395.500h2.500M476.500 395.500h2.500" stroke="#222" stroke-width="1.600"/>
 <path d="M508 396v5l-5 4.500M508 401l5 4.500" stroke="#f4f4f4" stroke-width="2.400" fill="none" stroke-linecap="round"/><path d="M508 396v5l-5 4.500M508 401l5 4.500" stroke="#555" stroke-width=".6" fill="none"/>
</svg>
<div class="t" style="left:514.500px;top:395px;font-size:8.500px;color:#222;line-height:10px">1</div>

<!-- bottom-right overlay -->
<div style="left:519px;top:357px;width:121px;height:60px;background:#fff"></div>
<div style="left:523px;top:364px;width:117px;height:51.5px;background:#434343"></div>
</body></html>
